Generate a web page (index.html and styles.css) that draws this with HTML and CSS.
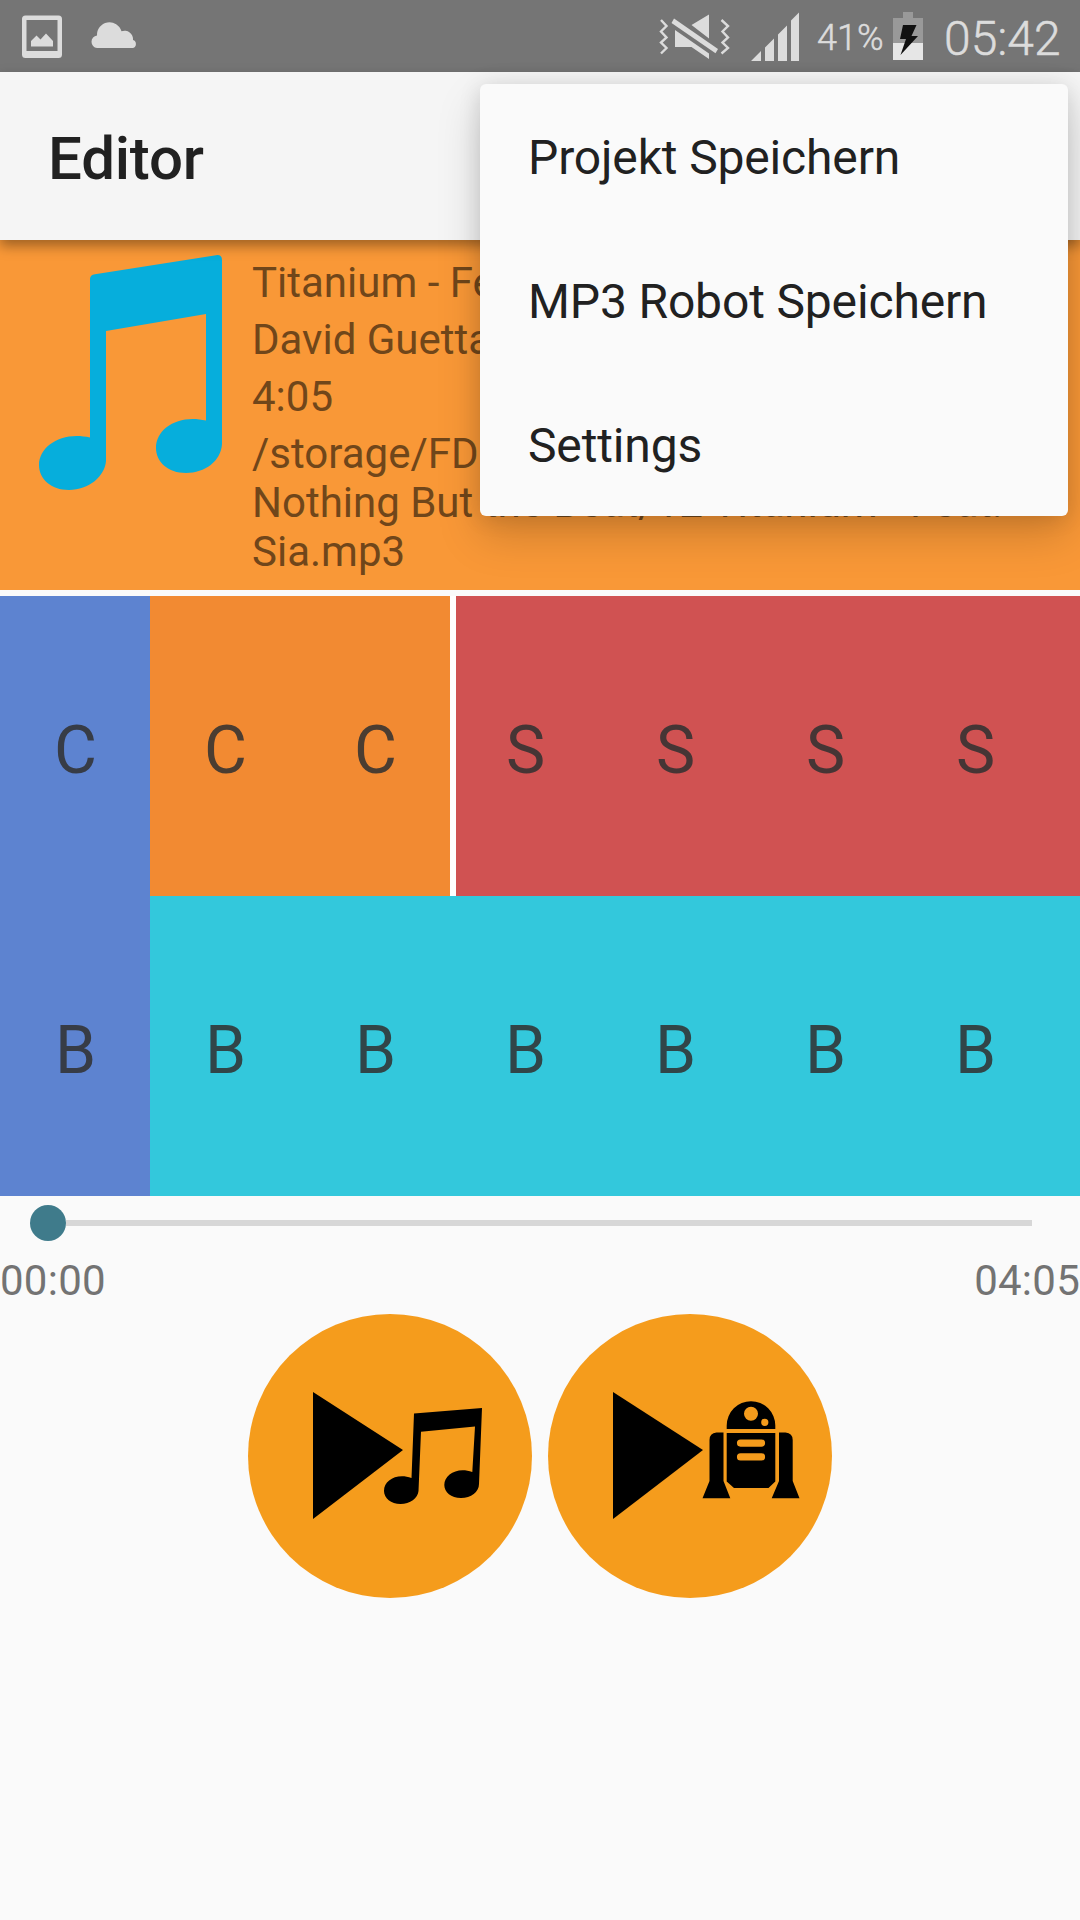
FILE: index.html
```html
<!DOCTYPE html>
<html lang="de">
<head>
<meta charset="utf-8">
<title>Editor</title>
<link rel="stylesheet" href="styles.css">
</head>
<body>
<div class="screen">
  <header class="status">
    <svg class="status-left" width="150" height="72" viewBox="0 0 150 72" fill="#dcdcdc">
      <path fill-rule="evenodd" d="M25.500 15.500H58.500Q62 15.500 62 19V54.500Q62 58 58.500 58H25.500Q22 58 22 54.500V19Q22 15.500 25.500 15.500ZM26.500 20V51H57.500V20Z"/>
      <path d="M31 46.500V41L36.500 35.500L40.500 39.500L46 33.500L53 41V46.500Z"/>
      <path d="M97 48A6.300 6.300 0 0 1 97 35.500A12.500 12.500 0 0 1 121.500 31.300A8.500 8.500 0 0 1 133 40A4.200 4.200 0 0 1 133 48Z"/>
    </svg>
    <div class="status-right">
      <svg width="148" height="72" viewBox="654 0 148 72" fill="#dcdcdc">
        <g fill="none" stroke="#dcdcdc" stroke-width="2.400"><path d="M661 20L666.500 26L661 31.500L666.500 37.500L661 42.500L666.500 48L661 53.500"/><path d="M721.500 20L728 26L722.500 31.500L728 37.500L722.500 42.500L728 48L721.500 53.500"/></g>
        <path d="M691.500 25L709 14.500V38.500ZM675 30L709 53.500V59L691.500 47H675Z"/>
        <path d="M674 18.500L718 49L715.500 53.300L671.500 23Z"/>
        <path d="M751 61L761 51V61ZM765 61V47.500L774 38.500V61ZM778 61V34.500L787 25.500V61ZM791 61V20.500L799 12.500V61Z"/>
      </svg>
      <span class="battery-text">41%</span>
      <svg width="30" height="72" viewBox="0 0 30 72"><path fill="#999" d="M10 12H20V18H30V43H0V18H10Z"/><path fill="#e6e6e6" d="M0 43H30V60H0Z"/><path fill="#111" d="M10 25H23.500L18.500 36H25L7.500 55L13 39H7Z"/></svg>
      <span class="clock">05:42</span>
    </div>
  </header>
  <div class="toolbar"><h1 class="title">Editor</h1></div>
  <main>
    <section class="song">
      <svg class="cover" width="252" height="350" viewBox="0 240 252 350" fill="#06aedc">
        <path d="M90 279Q90 275 95 274.200L216 255.200Q222 254.500 222 260V444C221 461 205 473 186 473C168 473 156 462 156 448C156 428 179 414 206 420.500V314L106 331V461C105 476 89 490 69 490C51 490 39 479 39 465C39 446 62 431 90 437.500Z"/>
      </svg>
      <div class="song-info">
        <p>Titanium - Fe</p>
        <p>David Guetta</p>
        <p>4:05</p>
        <p class="path">/storage/FD<br>Nothing But the Beat/12 Titanium - Feat.<br>Sia.mp3</p>
      </div>
    </section>
    <section class="grid">
      <div class="cell blue">C</div><div class="cell orange">C</div><div class="cell orange">C</div><div class="cell red cursor">S</div><div class="cell red">S</div><div class="cell red">S</div><div class="cell red">S</div><div class="red"></div>
      <div class="cell blue">B</div><div class="cell cyan">B</div><div class="cell cyan">B</div><div class="cell cyan">B</div><div class="cell cyan">B</div><div class="cell cyan">B</div><div class="cell cyan">B</div><div class="cyan"></div>
    </section>
    <div class="seek"><span class="thumb"></span><span class="track"></span></div>
    <div class="times"><span>00:00</span><span>04:05</span></div>
    <div class="controls">
      <button class="play" aria-label="Play song">
        <svg width="284" height="284" viewBox="248 1314 284 284"><path d="M313 1392L403 1450L313 1519ZM414 1413.500L482 1408L479 1484C479 1492 471 1498 461 1498C451 1498 444.300 1492 444.300 1485C444.300 1474 458 1466.500 472.300 1472L475 1426.500L421 1431.700L418.500 1491C418 1498 410 1504 400.500 1504C391 1504 384 1498 384 1491C384 1480 397 1473 411.500 1478Z"/></svg>
      </button>
      <button class="play" aria-label="Play robot">
        <svg width="284" height="284" viewBox="548 1314 284 284"><path d="M613 1392L703 1450L613 1519Z"/><path fill-rule="evenodd" d="M726.700 1429V1425.500A24.300 24.300 0 0 1 775.300 1425.500V1429ZM744 1413.700a7 7 0 1 0 14 0a7 7 0 1 0 -14 0ZM761.200 1422.300a3.600 3.600 0 1 0 7.200 0a3.600 3.600 0 1 0 -7.200 0Z"/><path fill-rule="evenodd" d="M726.700 1433H775.300V1481.500L768.500 1488H734L726.700 1481.500ZM740.500 1439.500a3.600 3.600 0 0 0 0 7.200H761.500a3.600 3.600 0 0 0 0-7.200ZM740.500 1453.300a3.600 3.600 0 0 0 0 7.200H761.500a3.600 3.600 0 0 0 0-7.200Z"/><path d="M723.500 1432.500H716.500Q709.500 1433 709.500 1440V1481L702.500 1498.300H730.300L723.500 1481ZM779 1432.500H785.500Q792.700 1433 792.700 1440V1481L799.500 1498.300H771.700L779 1481Z"/></svg>
      </button>
    </div>
  </main>
  <nav class="menu"><a>Projekt Speichern</a><a>MP3 Robot Speichern</a><a>Settings</a></nav>
</div>
</body>
</html>
```
FILE: styles.css
```css
* { box-sizing: border-box; }
body { margin: 0; background: #fafafa; font-family: Roboto, sans-serif; }
svg { display: block; }
p, h1 { margin: 0; }
.screen { position: relative; width: 1080px; height: 1920px; overflow: hidden; }
.status { height: 72px; background: #757575; display: flex; justify-content: space-between; color: #dcdcdc; }
.status-right { display: flex; padding-right: 17px; font-weight: 300; -webkit-text-stroke: .5px #dcdcdc; }
.battery-text { width: 77px; margin-left: 15px; font-size: 36px; line-height: 76px; white-space: nowrap; }
.battery-text + svg { margin-left: -1px; }
.clock { width: 119px; margin-left: 21px; font-size: 48px; line-height: 77px; white-space: nowrap; }
.toolbar { position: relative; height: 168px; padding: 3px 48px 0; background: #f5f5f5; box-shadow: 0 6px 12px rgba(0,0,0,.36); }
.title { font-size: 60px; font-weight: 500; line-height: 168px; color: #212121; letter-spacing: -.2px; }
.song { display: flex; height: 350px; background: #f99837; }
.cover { flex: none; }
.song-info { padding-top: 14px; font-size: 42px; line-height: 49px; color: #70461a; white-space: nowrap; }
.song-info p { padding: 4px 0; }
.grid { display: grid; grid-template-columns: repeat(7, 150px) 30px; grid-template-rows: 300px 300px; margin-top: 6px; }
.cell { padding: 5px 0 0 1px; font-size: 66px; line-height: 300px; height: 300px; text-align: center; color: rgba(49,49,49,.87); }
.blue { background: #5d83d0; }
.orange { background: #f28a32; }
.red { background: #d05252; }
.cyan { background: #33c8dc; }
.cursor { box-shadow: inset 6px 0 #fff; }
.seek { display: flex; align-items: center; height: 54px; padding: 0 48px 0 30px; }
.thumb { width: 36px; height: 36px; border-radius: 50%; background: #3f7b8b; }
.track { flex: 1; height: 6px; background: #d7d7d7; }
.times { display: flex; justify-content: space-between; height: 57px; padding-top: 5px; font-size: 42px; line-height: 51px; letter-spacing: .25px; color: #737373; }
.controls { display: flex; justify-content: center; gap: 16px; padding-top: 7px; }
.play { width: 284px; height: 284px; padding: 0; border: 0; border-radius: 50%; background: #f59c1c; }
.menu { position: absolute; left: 480px; top: 84px; width: 588px; height: 432px; border-radius: 6px; background: #fafafa; box-shadow: 0 20px 44px rgba(0,0,0,.17), 0 2px 22px rgba(0,0,0,.12); }
.menu a { display: block; height: 144px; padding: 2px 48px 0; font-size: 48px; line-height: 144px; letter-spacing: -.15px; color: #212121; }
```
